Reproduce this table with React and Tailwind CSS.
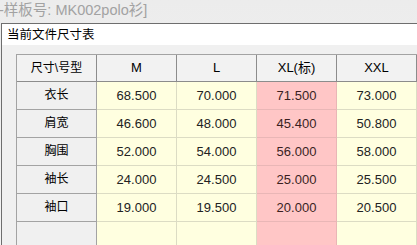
const sizes = ["M", "L", "XL(标)", "XXL"];

const rows = [
  ["衣长", ["68.500", "70.000", "71.500", "73.000"]],
  ["肩宽", ["46.600", "48.000", "45.400", "50.800"]],
  ["胸围", ["52.000", "54.000", "56.000", "58.000"]],
  ["袖长", ["24.000", "24.500", "25.000", "25.500"]],
  ["袖口", ["19.000", "19.500", "20.000", "20.500"]],
  ["", ["", "", "", ""]],
];

const font = { fontFamily: '"Liberation Sans", "Noto Sans CJK SC", sans-serif' };

export default function App() {
  return (
    <div
      className="w-[417px] h-[245px] overflow-hidden bg-gradient-to-b from-[#ececec] to-[#f4f4f4] text-black"
      style={font}
    >
      {/* caption strip above the window */}
      <div className="h-[23px] flex items-center -ml-[1px] pb-[1px] text-[14.5px] text-[#a2a2a2] whitespace-nowrap">
        -样板号: MK002polo衫]
      </div>

      <div className="ml-[1px] h-[222px] border-t border-l border-[#6e6e6e] bg-white flex flex-col">
        <div className="h-[24px] flex items-center pl-[5px] pt-[2px] text-[12.5px]">当前文件尺寸表</div>

        <div className="flex-1 bg-[#f0f0f0] pt-[9px] pl-[14px]">
          <div className="border-l border-t border-[#a3a3a3] w-max">
            {/* header */}
            <div className="flex">
              <div className="w-[80px] h-[27px] flex items-center justify-center text-[12px] bg-[#f2f2f2] border-r border-b border-[#8c8c8c]">
                尺寸\号型
              </div>
              {sizes.map((s) => (
                <div
                  key={s}
                  className="w-[80px] h-[27px] flex items-center justify-center text-[13px] bg-[#f2f2f2] border-r border-b border-[#8c8c8c]"
                >
                  {s}
                </div>
              ))}
            </div>

            {rows.map(([name, vals], i) => (
              <div key={i} className="flex">
                <div className="w-[80px] h-[28px] flex items-center justify-center text-[12px] bg-[#f0f0f0] border-r border-b border-[#a3a3a3]">
                  {name}
                </div>
                {vals.map((v, j) => (
                  <div
                    key={j}
                    className={
                      j === 2
                        ? "w-[80px] h-[28px] flex items-center justify-center text-[13px] text-[#3a1f1f] bg-[#ffc6c6] border-r border-b border-[#e9b6b6]"
                        : "w-[80px] h-[28px] flex items-center justify-center text-[13px] text-[#222] bg-[#ffffe0] border-r border-b border-[#dcdcc4]"
                    }
                  >
                    {v}
                  </div>
                ))}
              </div>
            ))}
          </div>
        </div>
      </div>
    </div>
  );
}
